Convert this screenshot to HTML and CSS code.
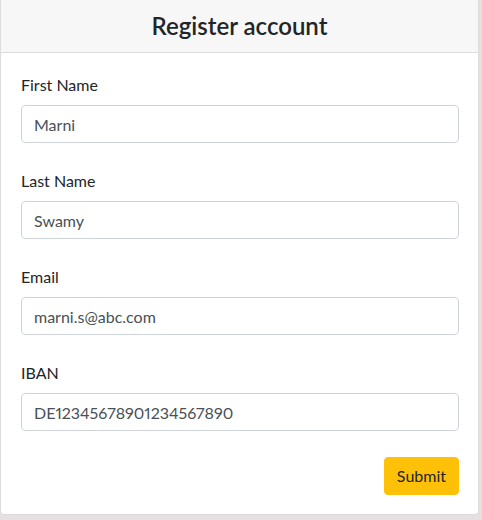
FILE: index.html
```html
<!DOCTYPE html>
<html lang="en">
<head>
<meta charset="utf-8">
<title>Register account</title>
<link rel="stylesheet" href="styles.css">
</head>
<body>
<div class="card">
  <div class="card-header">
    <h4 class="title">Register account</h4>
  </div>
  <form class="card-body">
    <div class="group">
      <label class="label" for="fn">First Name</label>
      <input class="input" id="fn" type="text" value="Marni">
    </div>
    <div class="group">
      <label class="label" for="ln">Last Name</label>
      <input class="input" id="ln" type="text" value="Swamy">
    </div>
    <div class="group">
      <label class="label" for="em">Email</label>
      <input class="input" id="em" type="text" value="marni.s@abc.com">
    </div>
    <div class="group">
      <label class="label" for="ib">IBAN</label>
      <input class="input" id="ib" type="text" value="DE12345678901234567890">
    </div>
    <div class="actions">
      <button class="btn" type="button">Submit</button>
    </div>
  </form>
</div>
</body>
</html>
```
FILE: styles.css
```css
html, body {
  margin: 0;
  padding: 0;
}
body {
  background: #e8dfe0;
  font-family: Lato, "Noto Sans", sans-serif;
  color: #212529;
  width: 479px;
}
.card {
  background: #fff;
  border: 1px solid #dcdcdc;
  border-top: 0;
  border-radius: 0 0 4px 4px;
  overflow: hidden;
}
.card-header {
  background: #f7f7f7;
  border-bottom: 1px solid #dcdcdc;
  padding: 12px 20px;
}
.title {
  margin: 0;
  font-size: 24px;
  line-height: 28px;
  font-weight: 600;
  text-align: center;
  color: #212529;
}
.card-body {
  margin: 0;
  padding: 20px 19px 19px 20px;
  display: flex;
  flex-direction: column;
  gap: 26px;
}
.group {
  display: flex;
  flex-direction: column;
  gap: 8px;
}
.label {
  font-size: 16px;
  line-height: 24px;
}
.input {
  box-sizing: border-box;
  height: 38px;
  margin: 0;
  padding: 6px 12px;
  border: 1px solid #ced4da;
  border-radius: 4px;
  font-family: inherit;
  font-size: 16px;
  font-variant-numeric: proportional-nums;
  color: #495057;
  background: #fff;
}
.actions {
  display: flex;
  justify-content: flex-end;
}
.btn {
  height: 38px;
  padding: 6px 12px;
  border: 1px solid #ffc107;
  border-radius: 4px;
  background: #ffc107;
  color: #212529;
  font-family: inherit;
  font-size: 16px;
  line-height: 24px;
}
```
